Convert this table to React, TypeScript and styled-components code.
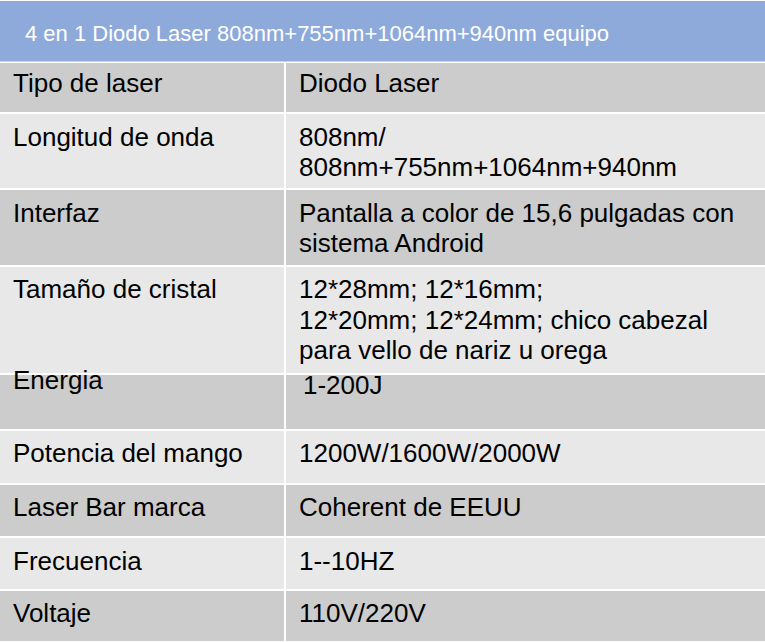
import React from "react";
import styled, { createGlobalStyle } from "styled-components";

const Global = createGlobalStyle`
  html, body { margin: 0; padding: 0; background: #ffffff; }
  body { font-family: "Liberation Sans", Arial, sans-serif; }
`;

const Page = styled.div`
  width: 765px;
  padding-top: 1px;
  background: #ffffff;
`;

const Header = styled.div`
  height: 61px;
  background: #8eaadb;
  color: #ffffff;
  font-size: 22px;
  line-height: 26px;
  padding-left: 25px;
  display: flex;
  align-items: center;
  padding-top: 5px;
  box-sizing: border-box;
  border-bottom: 1px solid #c9d3e6;
`;

const Table = styled.div`
  display: flex;
  flex-direction: column;
  gap: 2px;
  margin-top: 1px;
`;

const Row = styled.div<{ $h: number; $tone: "dark" | "light" }>`
  display: grid;
  grid-template-columns: 284px 1fr;
  column-gap: 2px;
  height: ${(p) => p.$h}px;
  background: #ffffff;
  & > div {
    background: ${(p) => (p.$tone === "dark" ? "#cccccc" : "#e8e8e8")};
  }
`;

const Cell = styled.div<{ $indent?: number }>`
  box-sizing: border-box;
  padding-left: ${(p) => 13 + (p.$indent ?? 0)}px;
  font-size: 26px;
  line-height: 30px;
  color: #000000;
  overflow: visible;
`;

const Text = styled.div<{ $pad: number; $lh?: number }>`
  margin-top: ${(p) => p.$pad}px;
  line-height: ${(p) => p.$lh ?? 30}px;
  position: relative;
`;

type RowData = {
  label: string;
  value: string[];
  h: number;
  tone: "dark" | "light";
  pad: number;
  vpad?: number;
  vindent?: number;
  lh?: number;
};

const rows: RowData[] = [
  { label: "Tipo de laser", value: ["Diodo Laser"], h: 49, tone: "dark", pad: 5 },
  { label: "Longitud de onda", value: ["808nm/", "808nm+755nm+1064nm+940nm"], h: 74, tone: "light", pad: 7.5 },
  { label: "Interfaz", value: ["Pantalla a color de 15,6 pulgadas con", "sistema Android"], h: 75, tone: "dark", pad: 7.5 },
  {
    label: "Tamaño de cristal",
    value: ["12*28mm; 12*16mm;", "12*20mm; 12*24mm; chico cabezal", "para vello de nariz u orega"],
    h: 106,
    tone: "light",
    pad: 7,
    lh: 30.6,
  },
  { label: "Energia", value: ["1-200J"], h: 54, tone: "dark", pad: -10.5, vpad: -5.5, vindent: 4 },
  { label: "Potencia del mango", value: ["1200W/1600W/2000W"], h: 52, tone: "light", pad: 7 },
  { label: "Laser Bar marca", value: ["Coherent de EEUU"], h: 51, tone: "dark", pad: 7 },
  { label: "Frecuencia", value: ["1--10HZ"], h: 51, tone: "light", pad: 7.5 },
  { label: "Voltaje", value: ["110V/220V"], h: 50, tone: "dark", pad: 7 },
];

export default function App() {
  return (
    <Page>
      <Global />
      <Header>4 en 1 Diodo Laser 808nm+755nm+1064nm+940nm equipo</Header>
      <Table>
        {rows.map((r) => (
          <Row key={r.label} $h={r.h} $tone={r.tone}>
            <Cell>
              <Text $pad={r.pad} $lh={r.lh}>{r.label}</Text>
            </Cell>
            <Cell $indent={r.vindent}>
              <Text $pad={r.vpad ?? r.pad} $lh={r.lh}>
                {r.value.map((line) => (
                  <div key={line}>{line}</div>
                ))}
              </Text>
            </Cell>
          </Row>
        ))}
      </Table>
    </Page>
  );
}
